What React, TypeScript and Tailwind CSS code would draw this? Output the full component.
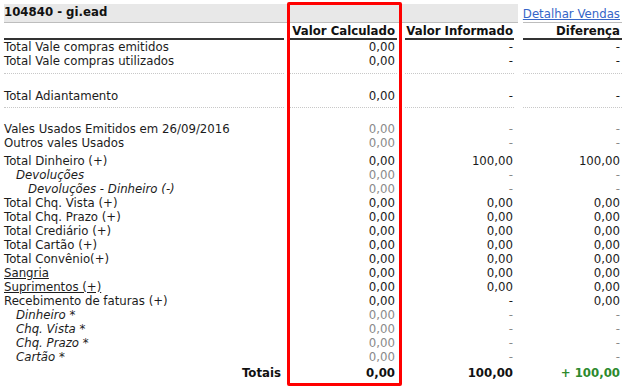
import React from "react";

type Tone = "normal" | "muted";

type Line = {
  label: string;
  calc: string;
  informed: string;
  diff: string;
  tone?: Tone;
  indent?: 0 | 1 | 2;
  italic?: boolean;
  link?: boolean;
};

const topLines: Line[] = [
  { label: "Total Vale compras emitidos", calc: "0,00", informed: "-", diff: "-" },
  { label: "Total Vale compras utilizados", calc: "0,00", informed: "-", diff: "-" },
];

const advanceLine: Line = { label: "Total Adiantamento", calc: "0,00", informed: "-", diff: "-" };

const voucherLines: Line[] = [
  { label: "Vales Usados Emitidos em 26/09/2016", calc: "0,00", informed: "-", diff: "-", tone: "muted" },
  { label: "Outros vales Usados", calc: "0,00", informed: "-", diff: "-", tone: "muted" },
];

const paymentLines: Line[] = [
  { label: "Total Dinheiro (+)", calc: "0,00", informed: "100,00", diff: "100,00" },
  { label: "Devoluções", calc: "0,00", informed: "-", diff: "-", tone: "muted", indent: 1, italic: true },
  { label: "Devoluções - Dinheiro (-)", calc: "0,00", informed: "-", diff: "-", tone: "muted", indent: 2, italic: true },
  { label: "Total Chq. Vista (+)", calc: "0,00", informed: "0,00", diff: "0,00" },
  { label: "Total Chq. Prazo (+)", calc: "0,00", informed: "0,00", diff: "0,00" },
  { label: "Total Crediário (+)", calc: "0,00", informed: "0,00", diff: "0,00" },
  { label: "Total Cartão (+)", calc: "0,00", informed: "0,00", diff: "0,00" },
  { label: "Total Convênio(+)", calc: "0,00", informed: "0,00", diff: "0,00" },
  { label: "Sangria", calc: "0,00", informed: "0,00", diff: "0,00", link: true },
  { label: "Suprimentos (+)", calc: "0,00", informed: "0,00", diff: "0,00", link: true },
  { label: "Recebimento de faturas (+)", calc: "0,00", informed: "-", diff: "0,00" },
  { label: "Dinheiro *", calc: "0,00", informed: "-", diff: "-", tone: "muted", indent: 1, italic: true },
  { label: "Chq. Vista *", calc: "0,00", informed: "-", diff: "-", tone: "muted", indent: 1, italic: true },
  { label: "Chq. Prazo *", calc: "0,00", informed: "-", diff: "-", tone: "muted", indent: 1, italic: true },
  { label: "Cartão *", calc: "0,00", informed: "-", diff: "-", tone: "muted", indent: 1, italic: true },
];

const indentClass = ["pl-0", "pl-[12px]", "pl-[24px]"];

// four columns: label, calculado, informado, diferença
const Cells: React.FC<{
  className?: string;
  cellClass?: string;
  children: [React.ReactNode, React.ReactNode, React.ReactNode, React.ReactNode];
}> = ({ className = "", cellClass = "", children }) => (
  <div className={`flex ${className}`}>
    <div className={`w-[280px] shrink-0 ${cellClass}`}>{children[0]}</div>
    <div className={`ml-[4px] w-[109px] shrink-0 pr-[2px] text-right ${cellClass}`}>{children[1]}</div>
    <div className={`ml-[8px] w-[109px] shrink-0 pr-[1px] text-right ${cellClass}`}>{children[2]}</div>
    <div className={`ml-[9px] w-[99px] shrink-0 pr-[2px] text-right ${cellClass}`}>{children[3]}</div>
  </div>
);

const Row: React.FC<{ line: Line }> = ({ line }) => {
  const muted = line.tone === "muted";
  const valueColor = muted ? "text-[#8a8a8a]" : "text-[#1c1c1c]";
  return (
    <Cells className="h-[14px] leading-[14px]">
      {[
        <span
          key="l"
          className={`block whitespace-nowrap ${indentClass[line.indent ?? 0]} ${line.italic ? "italic" : ""} ${
            line.link ? "underline" : ""
          } text-[#1c1c1c]`}
        >
          {line.label}
        </span>,
        <span key="c" className={valueColor}>{line.calc}</span>,
        <span key="i" className={line.informed === "-" && muted ? "text-[#8a8a8a]" : "text-[#1c1c1c]"}>
          {line.informed}
        </span>,
        <span key="d" className={line.diff === "-" && muted ? "text-[#8a8a8a]" : "text-[#1c1c1c]"}>
          {line.diff}
        </span>,
      ]}
    </Cells>
  );
};

const DottedGap: React.FC<{ before: string; after: string }> = ({ before, after }) => (
  <>
    <Cells cellClass={`${before} border-b border-dotted border-[#c8c8c8]`}>
      {[null, null, null, null]}
    </Cells>
    <div className={after} />
  </>
);

export default function App() {
  return (
    <div className="relative h-[389px] w-[628px] overflow-hidden bg-white pl-[4px] pt-[4px] font-['DejaVu_Sans',sans-serif] text-[11.75px] text-[#1c1c1c]">
      {/* store heading + link */}
      <div className="flex">
        <div className="flex h-[19px] w-[514px] items-center border-b border-[#bdbdbd] bg-[#e8e8e8] font-bold text-[#111]">
          104840 - gi.ead
        </div>
        <div className="ml-[5px] flex h-[19px] w-[99px] items-end justify-end border-b border-[#bdbdbd] pb-[1px] pr-[2px] leading-[14px]">
          <a href="#" className="whitespace-nowrap text-[#3565c8] underline">
            Detalhar Vendas
          </a>
        </div>
      </div>

      <Cells cellClass="h-[17px] whitespace-nowrap border-b-2 border-[#333] pt-px font-bold leading-[14px] text-[#111]">
        {[null, "Valor Calculado", "Valor Informado", "Diferença"]}
      </Cells>

      {topLines.map((l) => (
        <Row key={l.label} line={l} />
      ))}
      <DottedGap before="h-[6px]" after="h-[15px]" />
      <Row line={advanceLine} />
      <DottedGap before="h-[5px]" after="h-[14px]" />
      {voucherLines.map((l) => (
        <Row key={l.label} line={l} />
      ))}
      <div className="h-[4px]" />
      {paymentLines.map((l) => (
        <Row key={l.label} line={l} />
      ))}
      <div className="h-[2px]" />
      <Cells className="h-[14px] font-bold leading-[14px] text-[#111]">
        {[
          <span key="t" className="block pr-[3px] text-right">Totais</span>,
          "0,00",
          "100,00",
          <span key="g" className="text-[#2d8a2d]">+ 100,00</span>,
        ]}
      </Cells>

      {/* highlight around the calculated column */}
      <div className="pointer-events-none absolute left-[287px] top-[2px] h-[384px] w-[115px] rounded-[2px] border-[3px] border-[#ff0000]" />
    </div>
  );
}
